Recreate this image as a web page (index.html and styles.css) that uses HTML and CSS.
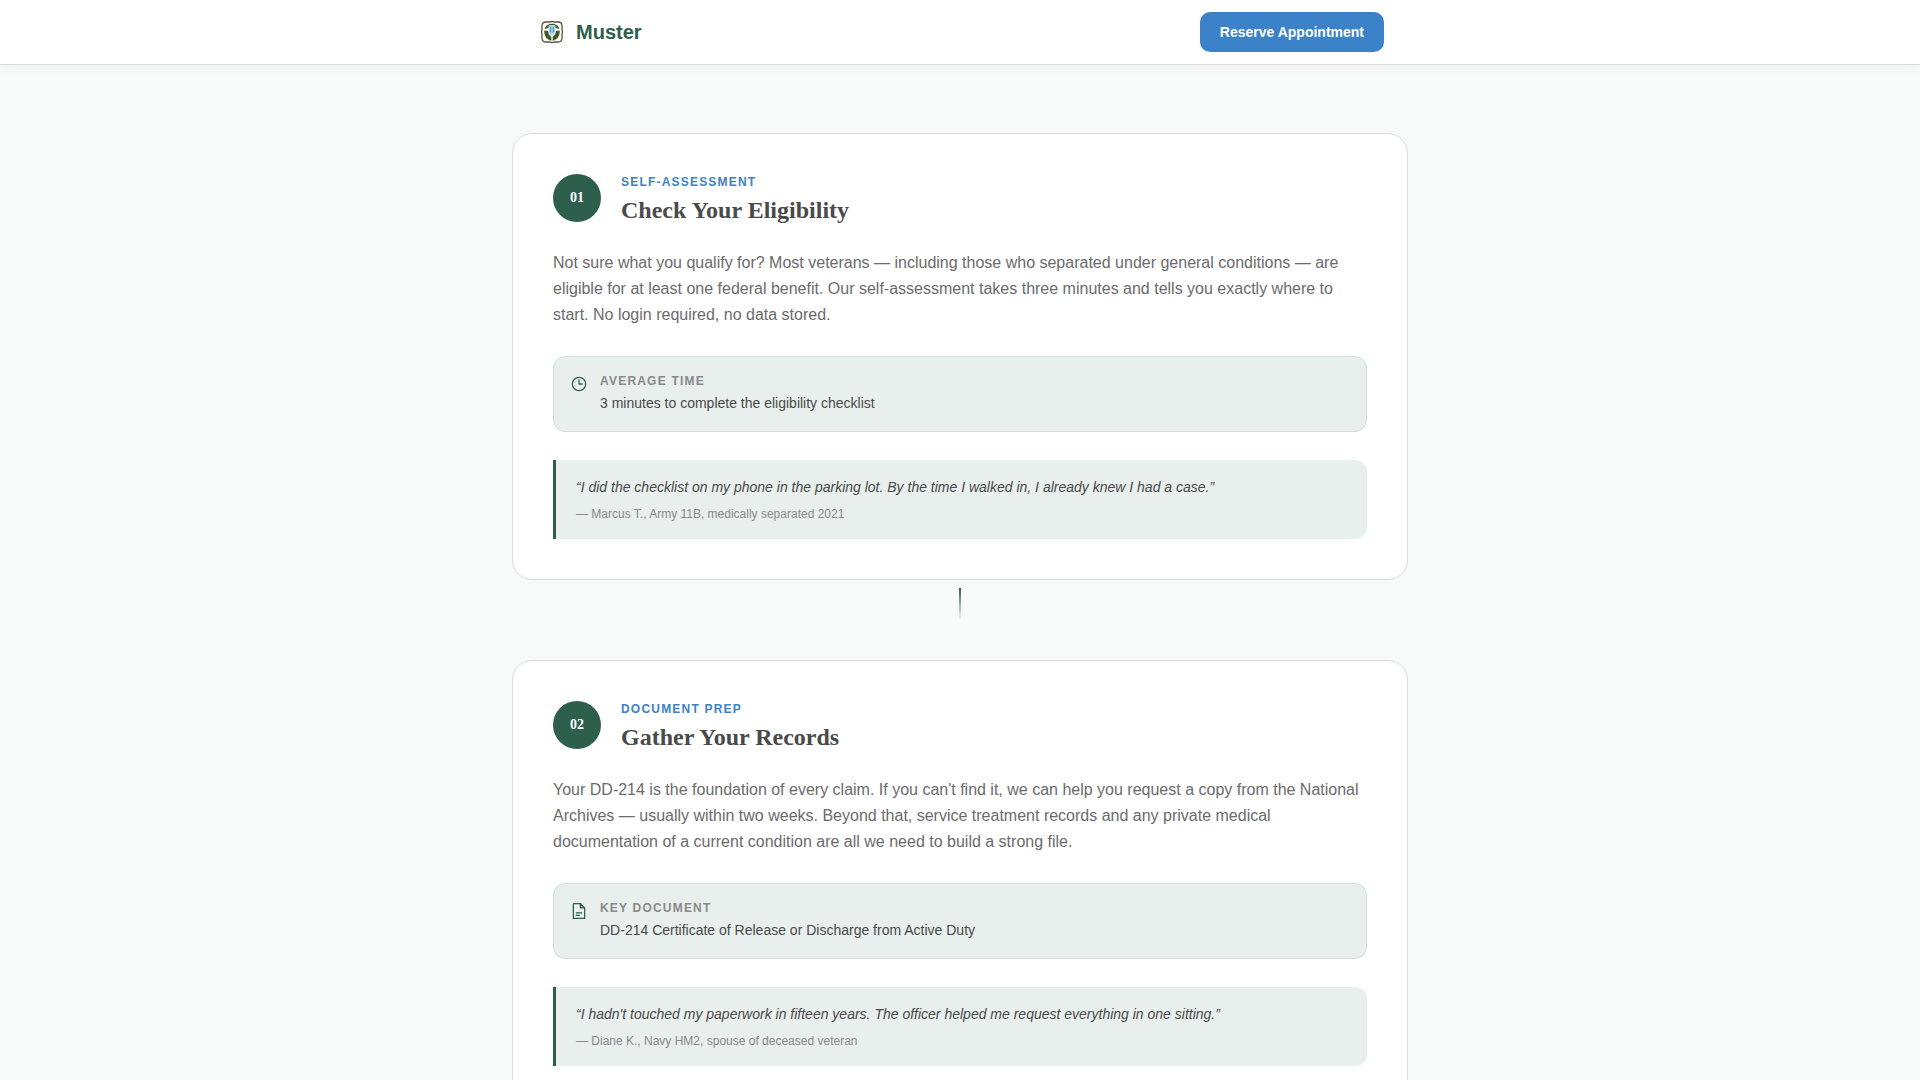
FILE: index.html
```html
<!DOCTYPE html>
<html lang="en">
<head>
<meta charset="utf-8">
<meta name="viewport" content="width=device-width, initial-scale=1">
<title>Muster</title>
<link rel="stylesheet" href="styles.css">
</head>
<body>
<header class="site-header">
  <div class="nav">
    <a class="brand" href="#">
      <svg class="brand-mark" viewBox="0 0 32 32" aria-hidden="true">
        <path d="M10 6h3.500q2.500-1 5 0H22q4 0 4 4v3.800q1 2.200 0 4.400V22q0 4-4 4h-3.500q-2.500 1-5 0H10q-4 0-4-4v-3.800q-1-2.200 0-4.400V10q0-4 4-4z" fill="#fffdf5" stroke="#55543a" stroke-width="1.300"/>
        <path d="M8.300 14.500c-.2 5.500 2.200 9 7 10.200v-3.900c-2-1-3-3.200-3.200-5.700zM23.700 14.500c.2 5.500-2.200 9-7 10.200v-3.900c2-1 3-3.200 3.200-5.700z" fill="#3d5728"/>
        <path d="M8.500 13q1-4 5.300-5l-1.300 4zM23.500 13q-1-4-5.300-5l1.300 4z" fill="#4a5c34"/>
        <path d="M12.500 10Q16 6.500 19.500 10l-.5 3q.8 2.500-.5 4.500L16 20l-2.500-2.500q-1.300-2-.5-4.500z" fill="#a4d6f2"/>
        <path d="M14.700 11v5.500M17.300 11v5.500" stroke="#4380ae" stroke-width=".9"/>
        <path d="M13.200 8.400h5.600" stroke="#3f5b3c" stroke-width="1.200"/>
      </svg>
      <span>Muster</span>
    </a>
    <button class="reserve" type="button">Reserve Appointment</button>
  </div>
</header>

<main class="steps">
  <article class="card">
    <header class="card-head">
      <div class="badge">01</div>
      <div>
        <p class="kicker">Self-Assessment</p>
        <h2 class="title">Check Your Eligibility</h2>
      </div>
    </header>
    <p class="copy">Not sure what you qualify for? Most veterans — including those who separated under general conditions — are eligible for at least one federal benefit. Our self-assessment takes three minutes and tells you exactly where to start. No login required, no data stored.</p>
    <div class="info">
      <svg class="info-icon" viewBox="0 0 20 20" aria-hidden="true">
        <circle cx="10" cy="10" r="7.400"/>
        <path d="M10 5.500V10h3.500"/>
      </svg>
      <div>
        <p class="label">Average Time</p>
        <p class="value">3 minutes to complete the eligibility checklist</p>
      </div>
    </div>
    <blockquote class="quote">
      <p class="quote-text">“I did the checklist on my phone in the parking lot. By the time I walked in, I already knew I had a case.”</p>
      <footer class="cite">— Marcus T., Army 11B, medically separated 2021</footer>
    </blockquote>
  </article>

  <div class="connector"></div>

  <article class="card">
    <header class="card-head">
      <div class="badge">02</div>
      <div>
        <p class="kicker">Document Prep</p>
        <h2 class="title">Gather Your Records</h2>
      </div>
    </header>
    <p class="copy">Your DD-214 is the foundation of every claim. If you can't find it, we can help you request a copy from the National Archives — usually within two weeks. Beyond that, service treatment records and any private medical documentation of a current condition are all we need to build a strong file.</p>
    <div class="info">
      <svg class="info-icon" viewBox="0 0 20 20" aria-hidden="true">
        <path d="M4.500 1.700h7l4.800 4.800v11.800H3.700V2.500q0-.8.800-.8zM11.500 1.900v4.600h4.600M7 12.200h6M7 14.900h3.300"/>
      </svg>
      <div>
        <p class="label">Key Document</p>
        <p class="value">DD-214 Certificate of Release or Discharge from Active Duty</p>
      </div>
    </div>
    <blockquote class="quote">
      <p class="quote-text">“I hadn't touched my paperwork in fifteen years. The officer helped me request everything in one sitting.”</p>
      <footer class="cite">— Diane K., Navy HM2, spouse of deceased veteran</footer>
    </blockquote>
  </article>
</main>
</body>
</html>
```
FILE: styles.css
```css
:root {
  --green: #2d5f4c;
  --blue: #3b82c8;
  --ink: #4a4a4a;
  --line: #d8dedc;
  --tint: #e8efed;
}

* {
  box-sizing: border-box;
}

body,
p,
h2,
blockquote {
  margin: 0;
}

body {
  background: #f7faf9;
  color: var(--ink);
  font-family: "Liberation Sans", Arial, sans-serif;
}

.site-header {
  position: sticky;
  top: 0;
  background: #ffffff;
  border-bottom: 1px solid var(--line);
  box-shadow: 0 2px 12px rgba(45, 95, 76, 0.06);
}

.nav {
  display: flex;
  align-items: center;
  justify-content: space-between;
  max-width: 896px;
  min-height: 64px;
  margin: 0 auto;
  padding: 0 24px;
}

.brand {
  display: flex;
  align-items: center;
  gap: 8px;
  color: var(--green);
  font-size: 20px;
  font-weight: 700;
  text-decoration: none;
}

.brand-mark {
  width: 32px;
  height: 32px;
  fill: none;
}

.reserve {
  padding: 0 20px;
  border: 0;
  border-radius: 10px;
  background: var(--blue);
  color: #ffffff;
  font: 700 14px/40px "Liberation Sans", Arial, sans-serif;
}

.steps {
  max-width: 896px;
  margin: 0 auto;
  padding: 68px 0;
}

.card {
  padding: 40px;
  border: 1px solid var(--line);
  border-radius: 20px;
  background: #ffffff;
}

.card-head {
  display: flex;
  gap: 20px;
  margin-bottom: 24px;
}

.badge {
  display: grid;
  flex: none;
  place-items: center;
  width: 48px;
  height: 48px;
  border-radius: 50%;
  background: var(--green);
  color: #ffffff;
  font: 700 14px/20px "Liberation Serif", "Times New Roman", serif;
}

.kicker,
.label {
  font-size: 12px;
  font-weight: 700;
  letter-spacing: 0.1em;
  line-height: 16px;
  text-transform: uppercase;
}

.kicker {
  color: var(--blue);
}

.title {
  margin-top: 4px;
  font: 700 24px/32px "Liberation Serif", "Times New Roman", serif;
}

.copy {
  margin-bottom: 28px;
  color: #6b6b6b;
  font-size: 16px;
  line-height: 26px;
}

.info {
  display: flex;
  gap: 12px;
  margin-bottom: 28px;
  padding: 16px;
  border: 1px solid var(--line);
  border-radius: 12px;
  background: var(--tint);
}

.info-icon {
  flex: none;
  width: 18px;
  height: 18px;
  margin-top: 2px;
  fill: none;
  stroke: var(--green);
  stroke-linecap: round;
  stroke-linejoin: round;
  stroke-width: 1.4;
}

.label {
  margin-bottom: 2px;
  color: #8a8a8a;
}

.value {
  font-size: 14px;
  line-height: 24px;
}

.quote {
  padding: 16px 20px;
  border-left: 3px solid var(--green);
  border-radius: 0 12px 12px 0;
  background: var(--tint);
}

.quote-text {
  margin-bottom: 8px;
  font-size: 14px;
  font-style: italic;
  line-height: 22px;
}

.cite {
  color: #8a8a8a;
  font-size: 12px;
  line-height: 17px;
}

.connector {
  width: 2px;
  height: 32px;
  margin: 8px auto 40px;
  background: linear-gradient(var(--green), transparent);
}
```
